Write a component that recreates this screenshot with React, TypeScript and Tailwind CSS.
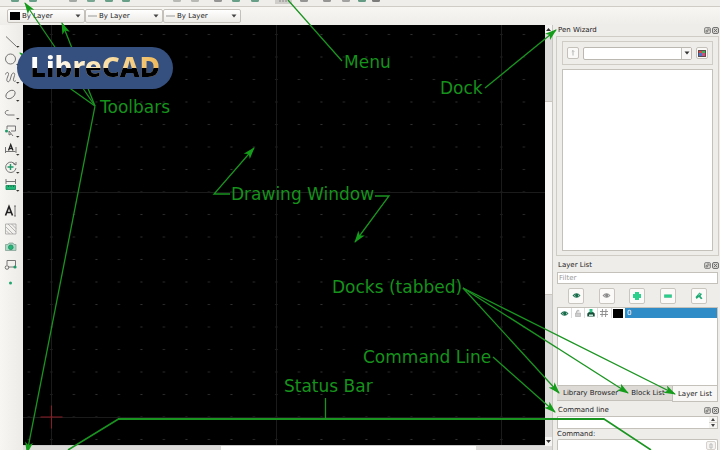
import type { ReactNode } from "react";

const LAYER_OPTIONS = ["By Layer", "By Block"];

interface ToolItem {
    name: string;
    icon: ReactNode;
    menu?: boolean;
}

const drawTools: ToolItem[] = [
    { name: "Line", menu: true, icon: <path d="M2 2.5 12 12" /> },
    { name: "Circle", menu: true, icon: <circle cx="6.5" cy="7" r="5" /> },
    {
        name: "Curve",
        menu: true,
        icon: <path d="M1.500 4.500C2 2 5 1.500 4.500 4.500L3 8.500c-1 3.500 2 4.500 3 1.500l1.500-5c1-3 4-2.500 3 .5l-1 3.500c-.5 2.500 1 3 2.500 1.500" />,
    },
    { name: "Ellipse", menu: true, icon: <ellipse cx="6.500" cy="6.500" rx="5.200" ry="3.500" transform="rotate(-38 6.500 6.500)" /> },
    { name: "Polyline", menu: true, icon: <path d="M4.500 4.500c-4-.5-4.500 4-.5 4.500h6.500" /> },
    {
        name: "Select",
        menu: true,
        icon: (
            <>
                <path d="M3 2h8.500v5H7M3 2v3M5 7l4 5M5 7v4l2-1" />
                <circle cx="2.500" cy="7" r="1.500" fill="#1c9a68" stroke="none" />
            </>
        ),
    },
    {
        name: "Dimension",
        menu: true,
        icon: (
            <>
                <path d="M1.500 5v6M12 5v6M2 9.500h9.500" />
                <path d="m4.500 8.500 2.200-6 2.300 6M5.200 6.500H8" stroke="#222" strokeWidth="1.300" />
            </>
        ),
    },
    {
        name: "Modify",
        menu: true,
        icon: (
            <>
                <path d="M11.500 5A5.200 5.200 0 1 0 12 8M9 3.500l3 1.500V2" />
                <path d="M6.500 4v6M3.500 7h6" stroke="#1c9a68" strokeWidth="1.400" />
            </>
        ),
    },
    {
        name: "Measure",
        menu: true,
        icon: (
            <>
                <path d="M2 1v5M11.500 1v5M2 3.500h9" />
                <path d="M2 7.500h9.500v4H2z" fill="#20b877" stroke="#1c8a5e" />
                <path d="M4.500 7.500v1.500M7 7.500v1.500M9.500 7.500v1.500" stroke="#146b46" />
            </>
        ),
    },
];

const extraTools: ToolItem[] = [
    {
        name: "Text",
        icon: (
            <>
                <path d="m1.500 11.500 3.500-9 3.500 9M3 8.500h4" stroke="#222" strokeWidth="1.600" />
                <path d="M10 2h2M10 12h2M11 2v10" />
            </>
        ),
    },
    { name: "Hatch", icon: <path d="M1.500 2h10.500v10H1.500zM2 5l7 7M2 8.500l3.500 3.500M4 2l8 8M7.500 2 12 6.500" stroke="#999" strokeWidth=".7" /> },
    {
        name: "Image",
        icon: (
            <>
                <path d="M1.500 4.500h2.500l1-1.500h4l1 1.500h2v6H1.500z" fill="#a8d8c4" stroke="#7d9a8e" strokeWidth=".7" />
                <circle cx="6.800" cy="7.300" r="2.300" fill="#20b877" stroke="#2b8a64" />
            </>
        ),
    },
    {
        name: "Block",
        icon: (
            <>
                <path d="M3 2.500h8.500v6.500H4M3 2.500V7" />
                <circle cx="3" cy="9.500" r="1.800" />
                <circle cx="11" cy="9" r="1.600" fill="#1c9a68" stroke="none" />
            </>
        ),
    },
    { name: "Point", icon: <circle cx="6.500" cy="7" r="1.500" fill="#20a56e" stroke="none" /> },
];

function ToolButton({ name, icon, menu }: ToolItem) {
    return (
        <button aria-label={name} className="flex h-[18px] items-center justify-center">
            <svg className="h-[14px] w-[16px]" viewBox="0 0 16 14" fill="none" stroke="#666" strokeWidth=".9">
                {icon}
                {menu && <path d="M12 12h3.500l-1.700 1.800z" fill="#333" stroke="none" />}
            </svg>
        </button>
    );
}

function PenSelect({ label, swatch }: { label: string; swatch?: boolean }) {
    return (
        <div className="relative h-[14px] w-[78px]">
            <select
                aria-label={label}
                className={`block h-full w-full appearance-none rounded-xs border border-[#c4c1bb] bg-gradient-to-b from-white to-[#eeece8] text-[7px] leading-none text-[#222] ${swatch ? "pl-[14px]" : "pl-[13px]"}`}
            >
                {LAYER_OPTIONS.map((option) => (
                    <option key={option}>{option}</option>
                ))}
            </select>
            <span
                className={`pointer-events-none absolute left-[3px] top-1/2 -translate-y-1/2 ${swatch ? "h-2 w-[10px] bg-black" : "h-px w-[9px] bg-[#999]"}`}
            />
            <svg className="pointer-events-none absolute right-1 top-[5px] h-1 w-[6px]" viewBox="0 0 6 4">
                <path d="M.5.5h5L3 3.500z" fill="#444" />
            </svg>
        </div>
    );
}

function DockTitle({ title }: { title: string }) {
    return (
        <div className="flex h-[11px] shrink-0 items-center justify-between pl-[2px]">
            <h2 className="text-[7px] leading-none">{title}</h2>
            <div className="flex gap-px">
                <button aria-label={`Float ${title}`}>
                    <svg className="h-[7px] w-[7px]" viewBox="0 0 7 7" fill="none" stroke="#777" strokeWidth=".8">
                        <rect x=".5" y=".5" width="6" height="6" rx="1.500" fill="#d4d2ce" />
                        <path d="M2 5V3.500h1.500V5zM3 2h2v2" />
                    </svg>
                </button>
                <button aria-label={`Close ${title}`}>
                    <svg className="h-[7px] w-[7px]" viewBox="0 0 7 7" fill="none" stroke="#666" strokeWidth=".9">
                        <rect x=".5" y=".5" width="6" height="6" rx="1.500" fill="#d4d2ce" />
                        <path d="m2 2 3 3M5 2 2 5" />
                    </svg>
                </button>
            </div>
        </div>
    );
}

function Eye({ color }: { color: string }) {
    return (
        <svg className="h-[7px] w-[9px]" viewBox="0 0 9 7">
            <path d="M.5 3.500Q4.500-1 8.500 3.500 4.500 8 .5 3.500z" fill={color} />
            <path d="M1.800 3.500Q3 2 4.500 2L4 5Q3 5 1.800 3.500zM6 2.300l1.500 1.200L6 4.700z" fill="#fff" opacity=".6" />
            <circle cx="4.500" cy="3.500" r="1.400" fill={color} />
        </svg>
    );
}

function PenWizard() {
    return (
        <section className="flex min-h-0 flex-1 flex-col">
            <DockTitle title="Pen Wizard" />
            <div className="flex min-h-0 flex-1 flex-col gap-1 border border-[#cfccc6] px-[5px] pb-1 pt-1">
                <div className="flex h-6 shrink-0 items-center gap-1 border border-[#cfccc6] px-1">
                    <button aria-label="Use pen" className="flex h-3 w-3 items-center justify-center rounded-xs border border-[#c4c1bb] bg-[#faf9f8]">
                        <svg className="h-2 w-2" viewBox="0 0 8 8" fill="none" stroke="#b5b5b5">
                            <path d="M4 6.500v-5M2.800 2.700 4 1.500l1.200 1.200" />
                        </svg>
                    </button>
                    <div className="relative h-[13px] flex-1">
                        <select aria-label="Pen color" className="block h-full w-full appearance-none rounded-xs border border-[#bbb8b2] bg-white text-[7px]">
                            <option></option>
                        </select>
                        <span className="pointer-events-none absolute inset-y-px right-px flex w-[10px] items-center justify-center border-l border-[#c4c1bb] bg-[#f8f7f5]">
                            <svg className="h-1 w-[6px]" viewBox="0 0 6 4">
                                <path d="M.5.5h5L3 3.500z" fill="#333" />
                            </svg>
                        </span>
                    </div>
                    <button aria-label="Pick color" className="flex h-3 w-3 items-center justify-center rounded-xs border border-[#c4c1bb] bg-[#faf9f8]">
                        <svg className="h-[7px] w-2" viewBox="0 0 8 7">
                            <rect width="8" height="7" fill="#5d4a4a" />
                            <path d="M1 1h3v2H1z" fill="#d84848" />
                            <path d="M4 1h3v2H4z" fill="#35b65a" />
                            <path d="M1 3h3v3H1z" fill="#4177cf" />
                            <path d="M4 3h3v3H4z" fill="#d24f7c" />
                        </svg>
                    </button>
                </div>
                <div className="min-h-0 flex-1 border border-[#c4c1bb] bg-white" />
            </div>
        </section>
    );
}

const layerActions: ToolItem[] = [
    { name: "Show all layers", icon: <Eye color="#176b4a" /> },
    { name: "Hide all layers", icon: <Eye color="#8a8a8a" /> },
    {
        name: "Add layer",
        icon: (
            <svg className="h-2 w-2" viewBox="0 0 8 8">
                <path d="M2 0h4v2h2v4H6v2H2V6H0V2h2z" fill="#2bd08c" />
            </svg>
        ),
    },
    {
        name: "Remove layer",
        icon: (
            <svg className="h-2 w-2" viewBox="0 0 8 8">
                <path d="M.3 2.700h7.400v2.800H.3z" fill="#2bd08c" stroke="#25a873" strokeWidth=".4" />
            </svg>
        ),
    },
    {
        name: "Edit layer",
        icon: (
            <svg className="h-2 w-2" viewBox="0 0 8 8">
                <path d="m.5 5 4-4.500L7 2 5.500 4l2 2.500-1.500.7L4 5 1.500 7z" fill="#21a873" />
                <path d="m3.500 3 2-1.500" stroke="#9de8c8" />
            </svg>
        ),
    },
];

function LayerList() {
    return (
        <section className="shrink-0">
            <div className="pt-1">
                <DockTitle title="Layer List" />
            </div>
            <div className="px-px">
                <input
                    aria-label="Filter"
                    placeholder="Filter"
                    className="mt-px block h-3 w-full border border-[#c4c1bb] bg-white pl-px text-[7px] leading-none placeholder:text-[#999]"
                />
                <div className="flex h-[23px] items-center justify-around px-1">
                    {layerActions.map(({ name, icon }) => (
                        <button key={name} aria-label={name} className="flex h-4 w-4 items-center justify-center rounded-xs border border-[#c9c6c0] bg-[#fbfaf9]">
                            {icon}
                        </button>
                    ))}
                </div>
                <div className="h-[79px] border border-[#c4c1bb] bg-white">
                    <table className="w-full table-fixed border-collapse text-[7px] leading-none">
                        <tbody>
                            <tr className="h-[10px]">
                                <td className="w-[13px] border-r border-[#ddd] p-0">
                                    <div className="flex justify-center"><Eye color="#176b4a" /></div>
                                </td>
                                <td className="w-[13px] border-r border-[#ddd] p-0">
                                    <svg className="mx-auto h-2 w-2" viewBox="0 0 8 8" fill="#ccc" stroke="#aaa" strokeWidth=".6">
                                        <path d="M1.500 4h5v3.500h-5zM2.500 4V2Q4 0 5.500 2" />
                                    </svg>
                                </td>
                                <td className="w-[13px] border-r border-[#ddd] p-0">
                                    <svg className="mx-auto h-2 w-2" viewBox="0 0 8 8">
                                        <path d="M.3 4.500 2 3h4l1.700 1.500v3H.3z" fill="#174c39" />
                                        <path d="M2.500 0h3v3.500h-3z" fill="#2bc083" />
                                        <path d="M2 5.500h4V7H2z" fill="#c5e7da" />
                                    </svg>
                                </td>
                                <td className="w-[14px] border-r border-[#ddd] p-0">
                                    <svg className="mx-auto h-2 w-2" viewBox="0 0 8 8" stroke="#888" strokeWidth=".9">
                                        <path d="M2.500 0 2 8M6 0l-.5 8M0 2.500h8M0 5.500h8" />
                                    </svg>
                                </td>
                                <td className="w-[14px] p-0">
                                    <div className="mx-auto h-[9px] w-[10px] bg-black" />
                                </td>
                                <td className="bg-[#308cc6] p-0 pl-[2px] text-white">0</td>
                            </tr>
                        </tbody>
                    </table>
                </div>
            </div>
            <div role="tablist" className="flex h-4 items-start px-px text-[7px] leading-none">
                <button role="tab" aria-selected="false" className="h-[15px] flex-[63] border-b border-[#c4c1bb] bg-[#dddad6] pl-1 pt-px">Library Browser</button>
                <button role="tab" aria-selected="false" className="h-[15px] flex-[51] border-b border-[#c4c1bb] bg-[#dddad6] pl-1 pt-px">Block List</button>
                <button role="tab" aria-selected="true" className="h-4 flex-[47] border border-t-0 border-[#c4c1bb] bg-[#f8f7f5] pt-px">Layer List</button>
            </div>
        </section>
    );
}

function CommandLine() {
    return (
        <section className="shrink-0 pt-[3px]">
            <DockTitle title="Command line" />
            <div className="px-px">
                <div className="flex h-[13px] border border-[#c4c1bb] bg-white">
                    <output className="flex-1" />
                    <div className="flex w-2 flex-col bg-[#f5f4f2]">
                        <button aria-label="Scroll up" className="flex flex-1 items-center justify-center border-b border-[#d5d2cc]">
                            <svg className="h-[3px] w-1" viewBox="0 0 4 3"><path d="M0 3h4L2 0z" fill="#444" /></svg>
                        </button>
                        <button aria-label="Scroll down" className="flex flex-1 items-center justify-center">
                            <svg className="h-[3px] w-1" viewBox="0 0 4 3"><path d="M0 0h4L2 3z" fill="#444" /></svg>
                        </button>
                    </div>
                </div>
                <label htmlFor="command" className="block h-[10px] text-[7px] leading-[10px]">Command:</label>
                <div className="flex h-[11px] rounded-t-xs border border-b-0 border-[#c4c1bb] bg-white pr-px pt-px">
                    <input id="command" className="min-w-0 flex-1 text-[7px] outline-none" />
                    <button aria-label="Command options" className="flex w-[10px] items-center justify-center rounded-xs border border-[#d5d2cc] bg-[#f5f4f2]">
                        <svg className="h-[6px] w-1" viewBox="0 0 4 6" fill="none" stroke="#bbb"><path d="M1 1h2v4H1z" /></svg>
                    </button>
                </div>
            </div>
        </section>
    );
}

function DrawingCanvas() {
    return (
        <svg className="block min-h-0 w-full flex-1 bg-black" role="img" aria-label="Drawing window">
            <defs>
                <pattern id="dots" x="17.150" y="-1.750" width="22.500" height="22.500" patternUnits="userSpaceOnUse">
                    <rect x="10.250" y="10.750" width="2" height="1" fill="#333" />
                </pattern>
            </defs>
            <rect width="100%" height="100%" fill="url(#dots)" />
            <g stroke="#1b1b1b">
                <path d="M28.500 0v420M253.500 0v420M478.500 0v420" />
                <path d="M0 167.500h522M0 392.500h522" />
            </g>
            <path d="M17.500 392h22M28.500 380.500v23" stroke="#8c1c24" />
        </svg>
    );
}

const labels = [
    { text: "Menu", x: 344, y: 68 },
    { text: "Dock", x: 440, y: 94 },
    { text: "Toolbars", x: 100, y: 113 },
    { text: "Drawing Window", x: 231, y: 200 },
    { text: "Docks (tabbed)", x: 332, y: 293 },
    { text: "Command Line", x: 363, y: 363 },
    { text: "Status Bar", x: 284, y: 392 },
];

const arrows = [
    "M95 106 25 3",
    "M95 106 62 23",
    "M95 106 20 53",
    "M95 106 27 453",
    "M485 88 556 30",
    "M463 288 559 393",
    "M463 288 628 393",
    "M463 288 675 394",
    "M493 357 555 412",
    "M230 194H214L254 148",
    "M375 196H389L355 242",
];

// Callouts drawn over the whole window
function Annotations() {
    return (
        <svg className="pointer-events-none absolute inset-0 h-full w-full" fill="none">
            <defs>
                <marker id="head" viewBox="0 0 12 8" refX="11" refY="4" markerWidth="12" markerHeight="8" markerUnits="userSpaceOnUse" orient="auto">
                    <path d="M0 0 12 4 0 8 3 4z" fill="#149c1a" />
                </marker>
            </defs>
            <g stroke="#1a9420" strokeWidth="1.300">
                {arrows.map((d) => (
                    <path key={d} d={d} markerEnd="url(#head)" />
                ))}
                <path d="M342 61 288 0M325.500 398v21" />
                <path d="M68 450l50.500-31M604 419l47 31" strokeWidth="1.600" />
                <path d="M118 419h486.500" strokeWidth="2" />
            </g>
            <g fill="#16921c" className="font-['DejaVu_Sans',sans-serif] text-[17px]">
                {labels.map(({ text, x, y }) => (
                    <text key={text} x={x} y={y}>{text}</text>
                ))}
            </g>
        </svg>
    );
}

const cutIcons = [
    { x: 11, color: "#3b8468" },
    { x: 29, color: "#3b8468" },
    { x: 69, color: "#8b908c" },
    { x: 87, color: "#4f8d75" },
    { x: 105, color: "#3b8468" },
    { x: 122, color: "#3b8468" },
    { x: 173, color: "#a5a5a2" },
    { x: 191, color: "#a5a5a2" },
    { x: 214, color: "#777" },
    { x: 232, color: "#3b8468" },
    { x: 251, color: "#3b8468" },
    { x: 300, color: "#777" },
    { x: 323, color: "#777" },
    { x: 342, color: "#888" },
    { x: 358, color: "#347f61" },
    { x: 372, color: "#555" },
];

export default function App() {
    return (
        <div className="relative flex h-screen flex-col overflow-hidden bg-[#efedea] font-['DejaVu_Sans',sans-serif] text-[#222]">
            <header className="shrink-0">
                <div className="h-[7px] border-b border-[#cfccc6] bg-[#f0eeeb]">
                    <svg className="block h-[6px] w-full">
                        <rect x="275" y="0" width="17" height="4" fill="#d0cecb" />
                        {cutIcons.map(({ x, color }) => (
                            <path key={x} d={`M${x} 0v.5q0 1.500 1.500 1.500h5q1.500 0 1.500-1.500V0`} fill={color} opacity=".75" />
                        ))}
                        <path d="M280 0v2M283 0v2M286 0v2" stroke="#888" />
                    </svg>
                </div>
                <div className="flex h-[18px] items-center bg-gradient-to-b from-[#f8f6f2] to-[#efede9] pl-[7px]">
                    <PenSelect label="Pen color" swatch />
                    <PenSelect label="Pen width" />
                    <PenSelect label="Pen line type" />
                </div>
            </header>

            <main className="flex min-h-0 flex-1">
                <nav aria-label="Tools" className="flex w-[23px] shrink-0 flex-col gap-2 bg-gradient-to-r from-[#f8f6f2] to-[#edebe8] pt-[7px]">
                    <div className="flex flex-col">
                        {drawTools.map((tool) => (
                            <ToolButton key={tool.name} {...tool} />
                        ))}
                    </div>
                    <div className="flex flex-col">
                        {extraTools.map((tool) => (
                            <ToolButton key={tool.name} {...tool} />
                        ))}
                    </div>
                </nav>

                <div className="flex min-w-0 flex-1 flex-col">
                    <DrawingCanvas />
                    <div className="flex h-[5px] shrink-0 border-t border-[#ccc] bg-[#dedcda]">
                        <div className="flex-[198]" />
                        <div className="flex-[255] bg-white" />
                        <div className="flex-[69]" />
                    </div>
                </div>

                <div className="flex w-2 shrink-0 flex-col border-r border-[#c9c6c0] bg-[#dedcda]">
                    <button aria-label="Scroll up" className="flex h-[9px] items-center justify-center bg-[#f5f4f2]">
                        <svg className="h-[3px] w-[5px]" viewBox="0 0 5 3"><path d="M0 3h5L2.500 0z" fill="#333" /></svg>
                    </button>
                    <div className="flex-[67]" />
                    <div className="flex-[193] border-y border-[#c9c6c0] bg-[#f8f7f5]" />
                    <div className="flex-[143]" />
                    <button aria-label="Scroll down" className="flex h-[9px] items-center justify-center bg-[#f5f4f2]">
                        <svg className="h-[3px] w-[5px]" viewBox="0 0 5 3"><path d="M0 0h5L2.500 3z" fill="#333" /></svg>
                    </button>
                    <div className="h-1" />
                </div>

                <aside className="flex w-[167px] shrink-0 flex-col pl-[3px] pr-px">
                    <PenWizard />
                    <LayerList />
                    <CommandLine />
                </aside>
            </main>

            <Annotations />
            <div className="absolute left-[17px] top-[47px] flex h-[42px] w-[156px] justify-center rounded-full bg-[#35507f]">
                <h1 className="bg-[linear-gradient(to_bottom,transparent_50%,#000_50%),linear-gradient(to_right,#fff_10%,#fbe3ae_55%,#f0b95a)] bg-clip-text font-['Noto_Sans',sans-serif] text-[28px] font-extrabold leading-[38px] text-transparent">
                    LibreCAD
                </h1>
            </div>
        </div>
    );
}
